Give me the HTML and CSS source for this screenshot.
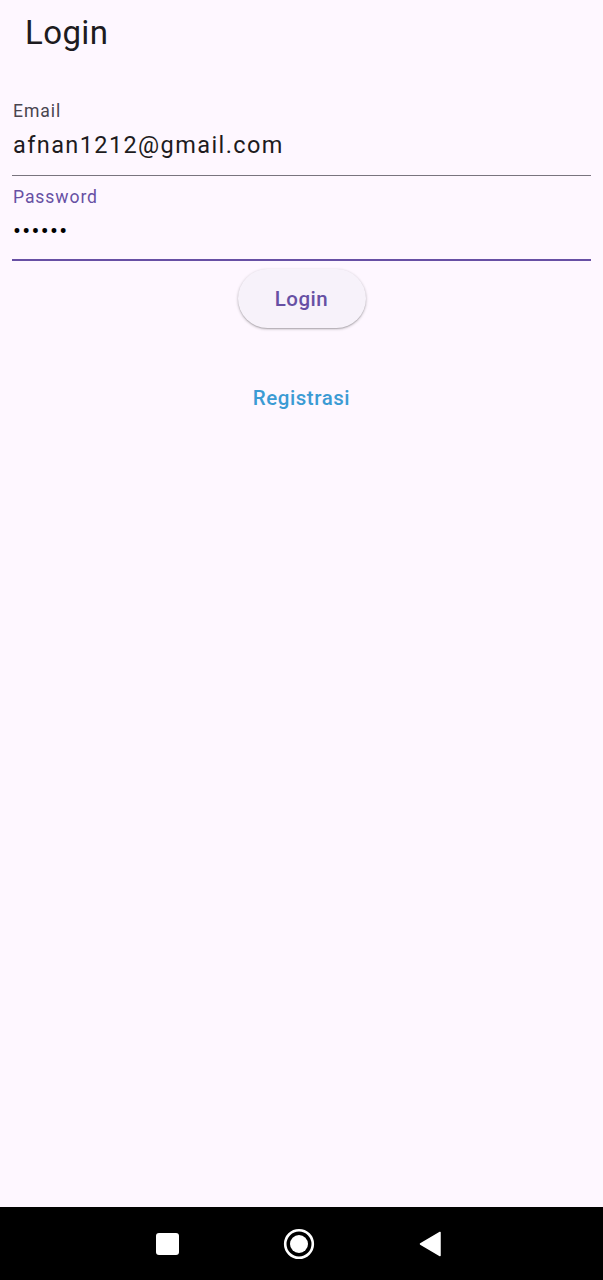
FILE: index.html
```html
<!DOCTYPE html>
<html lang="id">
<head>
<meta charset="utf-8">
<title>Login</title>
<link rel="stylesheet" href="styles.css">
</head>
<body>
<div class="screen">
  <header class="appbar"><h1 class="title">Login</h1></header>
  <main class="content">
    <div class="field">
      <div class="label">Email</div>
      <div class="value">afnan1212@gmail.com</div>
    </div>
    <div class="field focused">
      <div class="label">Password</div>
      <div class="value dots">••••••</div>
    </div>
    <div class="actions">
      <button class="btn-login">Login</button>
      <button class="btn-text">Registrasi</button>
    </div>
  </main>
  <nav class="navbar">
    <span class="nav-square"></span>
    <svg class="nav-home" width="32" height="32" viewBox="0 0 32 32"><circle cx="16" cy="16" r="13.8" fill="none" stroke="#fff" stroke-width="2.6"/><circle cx="16" cy="16" r="9" fill="#fff"/></svg>
    <svg class="nav-back" width="22" height="26" viewBox="0 0 22 26"><path d="M21 1.5 L21 24.5 L1.5 13 Z" fill="#fff" stroke="#fff" stroke-width="1.5" stroke-linejoin="round"/></svg>
  </nav>
</div>
</body>
</html>
```
FILE: styles.css
```css
* { box-sizing: border-box; }
html, body { margin: 0; padding: 0; }
body {
  background: #fef7ff;
  font-family: Roboto, "Noto Sans", sans-serif;
  color: #1d1b20;
}
.screen {
  display: flex;
  flex-direction: column;
  min-height: 1280px;
}
.appbar {
  height: 66px;
  display: flex;
  align-items: center;
  padding-left: 25px;
}
.title {
  margin: 0;
  font-size: 33px;
  font-weight: 400;
  line-height: 40px;
  letter-spacing: 0.4px;
  color: #1d1b20;
}
.content {
  flex: 1;
  padding: 35px 12px 0;
}
.field {
  border-bottom: 1px solid #79747e;
  padding-bottom: 15px;
}
.field + .field { margin-top: 11px; }
.field.focused {
  border-bottom: 2px solid #6750a4;
  padding-bottom: 13px;
}
.label {
  padding-left: 1px;
  font-size: 17.6px;
  line-height: 20px;
  color: #49454f;
  letter-spacing: 0.9px;
}
.focused .label { color: #6750a4; }
.value {
  margin-top: 9px;
  padding-left: 1px;
  font-size: 23.5px;
  line-height: 30px;
  letter-spacing: 1.4px;
  color: #1d1b20;
}
.dots { color: #000; letter-spacing: 1.3px; }
.actions {
  display: flex;
  flex-direction: column;
  align-items: center;
  padding-top: 8px;
}
.btn-login {
  width: 128px;
  height: 59px;
  border: none;
  border-radius: 30px;
  background: #f7f2fa;
  box-shadow: 0 1px 3px rgba(0,0,0,0.28), 0 1px 1px rgba(0,0,0,0.12);
  font-family: Roboto, sans-serif;
  font-size: 20.5px;
  font-weight: 500;
  line-height: 24px;
  color: #6750a4;
  letter-spacing: 0.5px;
  padding: 0;
}
.btn-text {
  margin-top: 58px;
  border: none;
  background: none;
  padding: 0;
  font-family: Roboto, sans-serif;
  font-size: 20.5px;
  font-weight: 500;
  line-height: 24px;
  color: #3b9bd4;
  letter-spacing: 0.55px;
}
.navbar {
  height: 73px;
  background: #000;
  display: flex;
  align-items: center;
  padding-left: 156px;
  gap: 104px;
}
.nav-square {
  width: 23px;
  height: 22px;
  background: #fff;
  border-radius: 3px;
}
.nav-home, .nav-back { display: block; }
```
